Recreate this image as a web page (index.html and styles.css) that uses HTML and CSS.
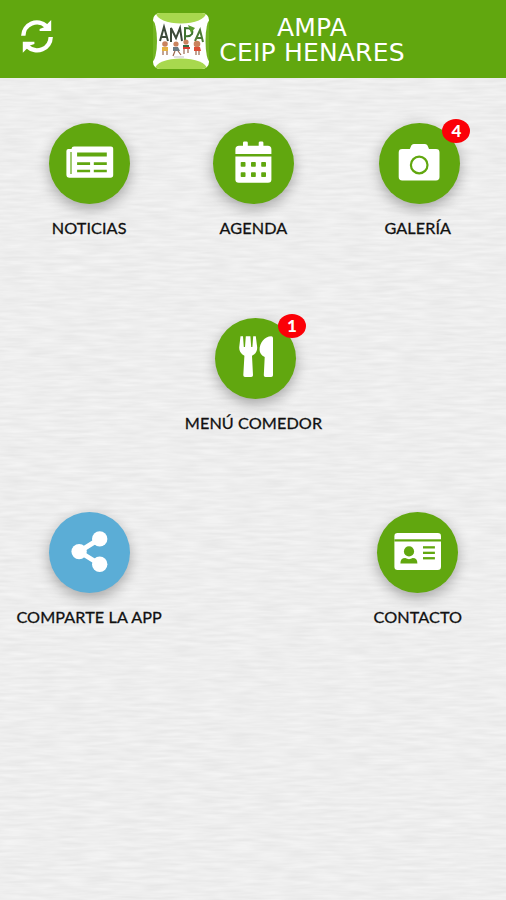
FILE: index.html
```html
<!DOCTYPE html>
<html lang="es">
<head>
    <meta charset="UTF-8">
    <meta name="viewport" content="width=device-width, initial-scale=1.0">
    <title>AMPA CEIP Henares</title>
    <link rel="stylesheet" href="styles.css">
</head>
<body>
    <header class="header">
        <svg class="refresh" viewBox="0 0 32 33">
            <path d="M2.3 15.8A13.6 13.6 0 0 1 25.3 6.2" fill="none" stroke="#fff" stroke-width="4.4"/>
            <path d="M30.2 0V11H18.6V8.9L23 7.2Z" fill="#fff"/>
            <path d="M29.7 17A13.6 13.6 0 0 1 6.7 26.6" fill="none" stroke="#fff" stroke-width="4.4"/>
            <path d="M1.8 32.7V21.8H13.4V24L9 25.6Z" fill="#fff"/>
        </svg>
        <svg class="logo" viewBox="0 0 56 56">
            <defs>
                <clipPath id="logo-shape"><rect width="56" height="56" rx="7"/></clipPath>
            </defs>
            <g clip-path="url(#logo-shape)">
                <rect width="56" height="56" fill="#fff"/>
                <ellipse cx="28" cy="0" rx="25" ry="10.5" fill="#a8d84e"/>
                <ellipse cx="28" cy="56" rx="26" ry="10.5" fill="#a8d84e"/>
                <ellipse cx="-1" cy="28" rx="5" ry="21" fill="#72b322"/>
                <ellipse cx="57" cy="28" rx="4.5" ry="21" fill="#72b322"/>
                <!-- children holding up the letters -->
                <g fill="none" stroke="#3d4a3a" stroke-width="2">
                    <path d="M7 28L11 14L15 28M8 24H14"/>
                    <path d="M18 29V15L23 25L27 15L29 28"/>
                    <path d="M32 29V15Q41 15 39 21Q37 24 32 23" stroke="#3f7330"/>
                    <path d="M42 28L47 17L50 29M43 25H49" stroke="#4c7a35"/>
                </g>
                <path d="M35 12L42 15L38 20Z" fill="#5a9c2d"/>
                <g fill="#c9825d">
                    <circle cx="12" cy="31" r="2.8"/>
                    <circle cx="23" cy="31" r="2.6"/>
                    <circle cx="33" cy="29" r="2.6"/>
                    <circle cx="44" cy="31" r="3.3"/>
                </g>
                <path d="M9 34H15V38H9Z" fill="#e5b243"/>
                <path d="M20 34H25L27 38H20Z" fill="#697b83"/>
                <path d="M30 32H36V36H30Z" fill="#376d43"/>
                <path d="M41 34H47L48 38H41Z" fill="#dc4d35"/>
                <path d="M10 38V42M14 38V42M22 38L20 43M25 38L28 42M31 36V41M35 36V40M43 38V42M46 38V42" stroke="#99674c" stroke-width="1.2"/>
                <path d="M30 35H37" stroke="#db3c32" stroke-width="2"/>
                <path d="M21 44H31" stroke="#aaa" stroke-width=".7"/>
            </g>
        </svg>
        <h1 class="title">AMPA<br>CEIP HENARES</h1>
    </header>

    <main class="menu">
        <div class="row">
            <div class="item">
                <div class="circle">
                    <svg viewBox="0 0 81 81">
                        <path d="M25 23.4H62Q64.2 23.4 64.2 25.6V52Q64.2 54.7 61.5 54.7H20.5Q17.4 54.7 17.4 51.5V28Q17.4 26 19.4 26H22.6V25.4Q22.8 23.4 25 23.4Z" fill="#fff"/>
                        <path d="M22 29V51" stroke="#61a70f" stroke-width="1.2"/>
                        <path d="M28.1 29.4H57.8V33.6H28.1ZM28.1 39.3H41.1V41.9H28.1ZM44.8 39.3H57.8V41.9H44.8ZM28.1 46.7H41.1V49.3H28.1ZM44.8 46.7H57.8V49.3H44.8Z" fill="#61a70f"/>
                    </svg>
                </div>
                <span class="label">NOTICIAS</span>
            </div>
            <div class="item">
                <div class="circle">
                    <svg viewBox="0 0 81 81">
                        <path d="M22.4 31V26.5Q22.4 22.8 26 22.8H30V19.8Q30 18.4 31.4 18.4H33.4Q34.8 18.4 34.8 19.8V22.8H45.7V19.8Q45.7 18.4 47.1 18.4H49Q50.4 18.4 50.4 19.8V22.8H54.8Q58.4 22.8 58.4 26.5V31Z" fill="#fff"/>
                        <path d="M22.4 33.5H58.4V56.5Q58.4 59.8 55 59.8H25.8Q22.4 59.8 22.4 56.5Z" fill="#fff"/>
                        <g fill="#61a70f">
                            <rect x="27.7" y="39" width="4.8" height="4.8" rx=".8"/>
                            <rect x="38" y="39" width="4.8" height="4.8" rx=".8"/>
                            <rect x="48.2" y="39" width="4.8" height="4.8" rx=".8"/>
                            <rect x="27.7" y="49.3" width="4.8" height="4.8" rx=".8"/>
                            <rect x="38" y="49.3" width="4.8" height="4.8" rx=".8"/>
                            <rect x="48.2" y="49.3" width="4.8" height="4.8" rx=".8"/>
                        </g>
                    </svg>
                </div>
                <span class="label">AGENDA</span>
            </div>
            <div class="item">
                <div class="circle has-badge">
                    <svg viewBox="0 0 81 81">
                        <path d="M23.2 26H30.8L32.3 22.6Q33 21 34.8 21H46Q47.8 21 48.5 22.6L50 26H57Q60.5 26 60.5 29.4V54Q60.5 57.4 57 57.4H23.2Q19.7 57.4 19.7 54V29.4Q19.7 26 23.2 26Z" fill="#fff"/>
                        <circle cx="40.2" cy="42" r="8.3" fill="none" stroke="#61a70f" stroke-width="2.2"/>
                    </svg>
                    <span class="badge">4</span>
                </div>
                <span class="label">GALERÍA</span>
            </div>
        </div>

        <div class="row">
            <div class="item center">
                <div class="circle has-badge">
                    <svg viewBox="0 0 81 81">
                        <path d="M25.5 18.3H28L28.8 29H30L30.8 18.3H35.4L36.2 29H37.4L38.2 18.3H40.8L42.2 29.5Q42.3 35 37 37.8L38 57.2Q38 59 36.2 59H30Q28.3 59 28.3 57.2L29.4 37.8Q24.1 35 24.2 29.5Z" fill="#fff"/>
                        <path d="M56.3 18.3Q58 18.3 58 20V57.2Q58 59 56.2 59H50.5Q48.7 59 48.8 57.2L49.7 39Q44.7 36.5 44.6 32C44.6 25 49.5 18.3 56.3 18.3Z" fill="#fff"/>
                    </svg>
                    <span class="badge">1</span>
                </div>
                <span class="label">MENÚ COMEDOR</span>
            </div>
        </div>

        <div class="row">
            <div class="item">
                <div class="circle blue">
                    <svg viewBox="0 0 81 81">
                        <path d="M50.6 26.9L30.1 39.6L50.6 52.2" fill="none" stroke="#fff" stroke-width="4.8"/>
                        <g fill="#fff">
                            <circle cx="30.1" cy="39.6" r="7.7"/>
                            <circle cx="50.7" cy="26.9" r="7.7"/>
                            <circle cx="50.7" cy="52.3" r="7.7"/>
                        </g>
                    </svg>
                </div>
                <span class="label">COMPARTE LA APP</span>
            </div>
            <div class="item last">
                <div class="circle">
                    <svg viewBox="0 0 81 81">
                        <rect x="17.4" y="21" width="46.6" height="36.9" rx="3.2" fill="#fff"/>
                        <g fill="#61a70f">
                            <rect x="17.4" y="27.3" width="46.6" height="2.2"/>
                            <circle cx="32" cy="39.4" r="5.1"/>
                            <path d="M23.4 51.4Q23.4 46 28.3 46Q32 48.3 35.7 46Q40.4 46 40.4 51.4Z"/>
                            <rect x="46" y="34.2" width="11.9" height="2.3"/>
                            <rect x="46" y="39.7" width="11.9" height="2.3"/>
                            <rect x="46" y="45.1" width="11.9" height="2.3"/>
                        </g>
                    </svg>
                </div>
                <span class="label">CONTACTO</span>
            </div>
        </div>
    </main>
</body>
</html>
```
FILE: styles.css
```css
body {
    margin: 0;
    min-height: 900px;
    font-family: Lato, "Liberation Sans", sans-serif;
    background-color: #eee;
    /* brushed paper */
    background-image: url("data:image/svg+xml,%3Csvg xmlns='http://www.w3.org/2000/svg' width='506' height='900'%3E%3Cfilter id='p' x='0' y='0' width='100%25' height='100%25' color-interpolation-filters='sRGB'%3E%3CfeTurbulence type='fractalNoise' baseFrequency='.035 .3' numOctaves='2' seed='4'/%3E%3CfeColorMatrix values='.07 0 0 0 .897 .07 0 0 0 .897 .07 0 0 0 .897 0 0 0 0 1'/%3E%3C/filter%3E%3Crect width='506' height='900' filter='url(%23p)'/%3E%3C/svg%3E");
}
.header {
    display: flex;
    align-items: flex-start;
    box-sizing: border-box;
    height: 78px;
    padding: 12px 0 0 21px;
    background: #61a70f;
}
.refresh {
    width: 32px;
    height: 33px;
    margin-top: 8px;
}
.logo {
    width: 56px;
    height: 56px;
    margin: 1px 0 0 100px;
}
.title {
    width: 206px;
    margin: 3px 0 0;
    font-family: "DejaVu Sans", sans-serif;
    font-size: 25px;
    font-weight: normal;
    line-height: 25px;
    letter-spacing: 0.2px;
    text-align: center;
    color: #fff;
}
.menu {
    padding: 45.4px 6px 0 7px;
}
.row {
    display: grid;
    grid-template-columns: repeat(3, 1fr);
    height: 194.3px;
}
.item {
    display: flex;
    flex-direction: column;
    align-items: center;
}
.center {
    grid-column: 2;
}
.last {
    grid-column: 3;
}
.circle {
    position: relative;
    width: 81px;
    height: 81px;
    border-radius: 50%;
    background: #61a70f;
    box-shadow: 0 5px 14px rgba(0, 0, 0, 0.3);
}
.circle svg {
    display: block;
    width: 81px;
    height: 81px;
}
.blue {
    background: #5badd6;
}
.has-badge {
    margin: 0 -2px 0 2px;
}
.badge {
    position: absolute;
    top: -4px;
    right: -10px;
    width: 28px;
    height: 24px;
    border-radius: 14px / 12px;
    background: #fb0007;
    color: #fff;
    font-size: 17px;
    font-weight: 900;
    line-height: 24px;
    text-align: center;
}
.label {
    margin-top: 14px;
    font-size: 16.2px;
    line-height: 20px;
    letter-spacing: 0.1px;
    white-space: nowrap;
    color: #111;
    -webkit-text-stroke: 0.3px #111;
}
```
